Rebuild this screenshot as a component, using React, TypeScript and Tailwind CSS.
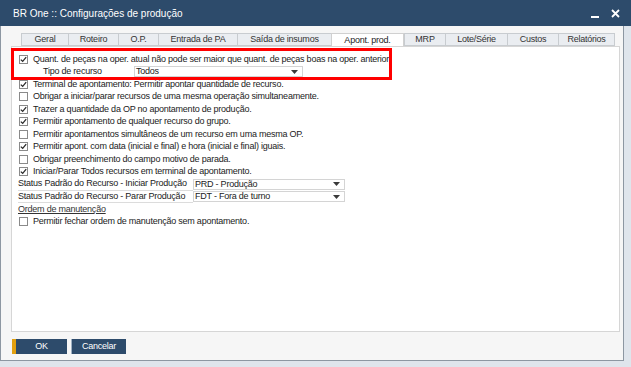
import React from 'react';

const tabs = [
  { label: 'Geral', w: 47 },
  { label: 'Roteiro', w: 50 },
  { label: 'O.P.', w: 40 },
  { label: 'Entrada de PA', w: 79 },
  { label: 'Saída de insumos', w: 94 },
  { label: 'Apont. prod.', w: 73, active: true },
  { label: 'MRP', w: 41 },
  { label: 'Lote/Série', w: 62 },
  { label: 'Custos', w: 51 },
  { label: 'Relatórios', w: 57 }
];

const options = [
  { label: 'Terminal de apontamento: Permitir apontar quantidade de recurso.', checked: true },
  { label: 'Obrigar a iniciar/parar recursos de uma mesma operação simultaneamente.', checked: false },
  { label: 'Trazer a quantidade da OP no apontamento de produção.', checked: true },
  { label: 'Permitir apontamento de qualquer recurso do grupo.', checked: true },
  { label: 'Permitir apontamentos simultâneos de um recurso em uma mesma OP.', checked: false },
  { label: 'Permitir apont. com data (inicial e final) e hora (inicial e final) iguais.', checked: true },
  { label: 'Obrigar preenchimento do campo motivo de parada.', checked: false },
  { label: 'Iniciar/Parar Todos recursos em terminal de apontamento.', checked: true }
];

function Check({ checked }: { checked: boolean }) {
  return (
    <span className="flex h-[9px] w-[9px] shrink-0 items-center justify-center border border-[#8a8a8a] bg-white">
      {checked && (
        <svg width="7" height="7" viewBox="0 0 7 7">
          <path d="M0.8 3.6 L2.7 5.4 L6.2 1.2" fill="none" stroke="#2b2b2b" strokeWidth="1.3" />
        </svg>
      )}
    </span>
  );
}

function Arrow() {
  return (
    <svg width="7" height="4" viewBox="0 0 7 4" className="shrink-0">
      <path d="M0 0 H7 L3.5 4 Z" fill="#3a3a3a" />
    </svg>
  );
}

function Select({ value, width }: { value: string; width: string }) {
  return (
    <div className={`flex h-[11px] shrink-0 items-center justify-between border border-[#d4d4d4] bg-white pl-[1px] pr-[4px] ${width}`}>
      <span className="whitespace-nowrap leading-none">{value}</span>
      <Arrow />
    </div>
  );
}

function OptionRow({ label, checked }: { label: string; checked: boolean }) {
  return (
    <div className="flex h-[12.5px] items-center gap-[5px] pl-[7px]">
      <Check checked={checked} />
      <span className="whitespace-nowrap leading-none">{label}</span>
    </div>
  );
}

export default function App() {
  return (
    <div
      className="flex h-[367px] w-[631px] flex-col overflow-hidden bg-[#dfe5ec] text-[9px] tracking-[-0.23px] text-[#222]"
      style={{ fontFamily: '"Liberation Sans", Arial, sans-serif' }}
    >
      {/* title bar */}
      <div className="flex h-[26px] shrink-0 items-center justify-between bg-[#2d4b6b] pl-[13px] pr-[11px] text-white">
        <span className="text-[10px] tracking-normal">BR One :: Configurações de produção</span>
        <div className="flex items-center gap-[12px]">
          <span className="mt-[7px] block h-[2px] w-[8px] bg-white" />
          <svg width="9" height="9" viewBox="0 0 9 9">
            <path d="M1 1 L8 8 M8 1 L1 8" stroke="white" strokeWidth="1.8" />
          </svg>
        </div>
      </div>

      <div className="flex flex-1">
        {/* window body */}
        <div className="flex h-[335px] w-[624px] shrink-0 flex-col border-x border-b border-[#8d97a2] bg-[#f6f6f6] pl-[10px] pt-[7px]">
          {/* tabs */}
          <div className="ml-[10px] flex h-[13px]">
            {tabs.map((t) => (
              <div
                key={t.label}
                className={
                  t.active
                    ? 'flex items-center justify-center border-x border-t border-[#d0d0d0] bg-white text-[#222]'
                    : 'flex items-center justify-center border-l border-t border-b border-[#c8ccd0] bg-[#eaedf1] text-[#333] last:border-r'
                }
                style={{ width: t.w }}
              >
                <span className="whitespace-nowrap leading-none">{t.label}</span>
              </div>
            ))}
          </div>

          {/* panel */}
          <div className="relative flex h-[286px] w-[609px] flex-col border border-[#d6d6d6] bg-white pt-[6px]">
            <div className="flex h-[12.5px] items-center gap-[5px] pl-[7px]">
              <Check checked />
              <span className="whitespace-nowrap leading-none">
                Quant. de peças na oper. atual não pode ser maior que quant. de peças boas na oper. anterior
              </span>
            </div>
            <div className="flex h-[12.5px] items-center pl-[31px]">
              <span className="w-[91px] whitespace-nowrap leading-none">Tipo de recurso</span>
              <Select value="Todos" width="w-[169px]" />
            </div>

            {options.map((o) => (
              <OptionRow key={o.label} label={o.label} checked={o.checked} />
            ))}

            <div className="flex h-[12.5px] items-center pl-[6px]">
              <span className="flex h-full w-[175px] shrink-0 items-center whitespace-nowrap border-b border-[#dcdcdc] leading-none">
                Status Padrão do Recurso - Iniciar Produção
              </span>
              <Select value="PRD - Produção" width="w-[152px]" />
            </div>
            <div className="flex h-[12.5px] items-center pl-[6px]">
              <span className="flex h-full w-[175px] shrink-0 items-center whitespace-nowrap border-b border-[#dcdcdc] leading-none">
                Status Padrão do Recurso - Parar Produção
              </span>
              <Select value="FDT - Fora de turno" width="w-[152px]" />
            </div>
            <div className="flex h-[12.5px] items-center pl-[6px]">
              <span className="whitespace-nowrap leading-none text-[#333] underline">Ordem de manutenção</span>
            </div>
            <OptionRow label="Permitir fechar ordem de manutenção sem apontamento." checked={false} />

            {/* highlight box */}
            <div className="pointer-events-none absolute left-[-1px] top-[1px] h-[32px] w-[381px] border-[3px] border-[#ff0000]" />
          </div>

          {/* buttons */}
          <div className="ml-[1px] mt-[7px] flex gap-[4px]">
            <button className="flex h-[15px] w-[55px] items-center justify-center border-l-[4px] border-[#e2a010] bg-[#2d4b6b] text-white">
              <span className="leading-none">OK</span>
            </button>
            <button className="flex h-[15px] w-[55px] items-center justify-center border-l border-[#9fb0c2] bg-[#2d4b6b] text-white">
              <span className="leading-none">Cancelar</span>
            </button>
          </div>
        </div>
        <div className="flex-1 bg-[#dfe5ec]" />
      </div>
    </div>
  );
}
